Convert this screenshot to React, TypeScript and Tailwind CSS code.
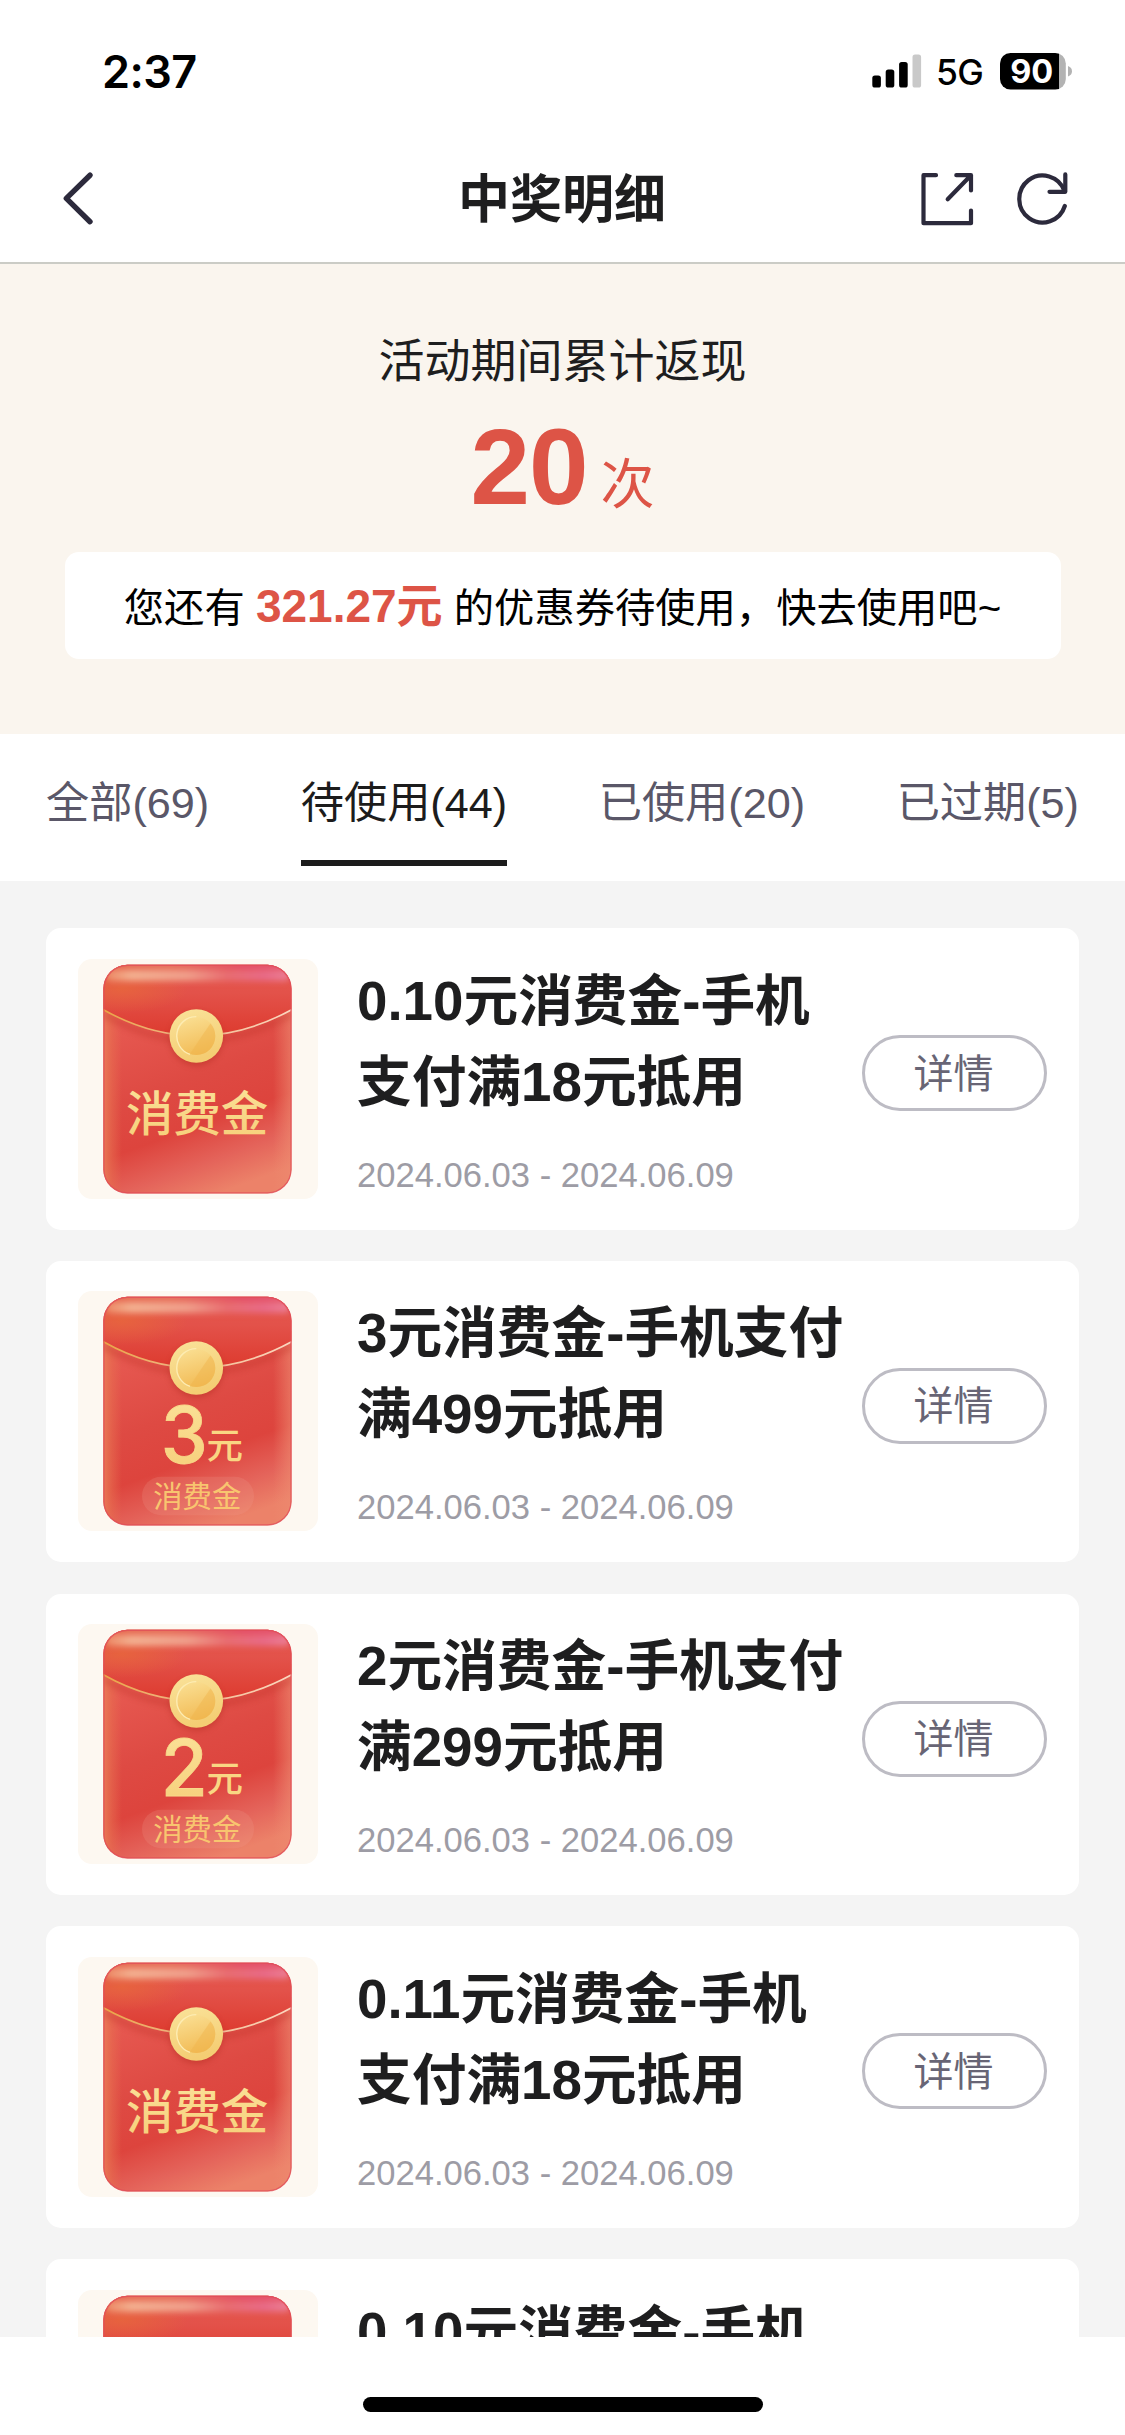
import React from "react";

const FONT = "font-['Liberation_Sans','Noto_Sans_CJK_SC',sans-serif]";

type Coupon = { title: [string, string]; date: string; amount?: string };

const COUPONS: Coupon[] = [
  { title: ["0.10元消费金-手机", "支付满18元抵用"], date: "2024.06.03 - 2024.06.09" },
  { title: ["3元消费金-手机支付", "满499元抵用"], date: "2024.06.03 - 2024.06.09", amount: "3" },
  { title: ["2元消费金-手机支付", "满299元抵用"], date: "2024.06.03 - 2024.06.09", amount: "2" },
  { title: ["0.11元消费金-手机", "支付满18元抵用"], date: "2024.06.03 - 2024.06.09" },
  { title: ["0.10元消费金-手机", "支付满18元抵用"], date: "2024.06.03 - 2024.06.09" },
];

const TABS = [
  { label: "全部(69)", active: false },
  { label: "待使用(44)", active: true },
  { label: "已使用(20)", active: false },
  { label: "已过期(5)", active: false },
];

function StatusBar() {
  return (
    <div className="flex h-[140px] shrink-0 items-start justify-between pl-[102px] pr-[53px] pt-[43px]">
      <div className="pt-[1px] font-['Inter'] text-[45px] font-semibold leading-[56px] tracking-[-0.6px] text-black">2:37</div>
      <div className="flex h-[56px] items-center">
        <svg width="50" height="34" viewBox="0 0 50 34" className="mr-[14px]">
          <rect x="0.3" y="21.5" width="8.6" height="12" rx="2.6" fill="#000" />
          <rect x="13.7" y="15.5" width="8.6" height="18" rx="2.6" fill="#000" />
          <rect x="27.1" y="8" width="8.6" height="25.5" rx="2.6" fill="#000" />
          <rect x="40.5" y="0.5" width="8.6" height="33" rx="2.6" fill="#c9c9c9" />
        </svg>
        <span className="mt-[3px] w-[64px] font-['Inter'] text-[35.5px] font-medium leading-[40px] tracking-[-0.8px] text-black">5G</span>
        <svg width="72" height="38" viewBox="0 0 72 38">
          <defs>
            <clipPath id="battery">
              <rect x="0" y="1" width="65.8" height="36.5" rx="10.5" />
            </clipPath>
          </defs>
          <g clipPath="url(#battery)">
            <rect x="0" y="0" width="59" height="38" fill="#000" />
            <rect x="59" y="0" width="8" height="38" fill="#b3b3b3" />
          </g>
          <path d="M68 14 Q72 15.5 72 19.3 Q72 23 68 24.5Z" fill="#b3b3b3" />
          <text x="31.7" y="31.3" textAnchor="middle" fontFamily="Inter" fontWeight="700" fontSize="32.5" fill="#fff">
            90
          </text>
        </svg>
      </div>
    </div>
  );
}

function NavBar() {
  return (
    <div className="flex h-[122px] shrink-0 items-center justify-between pl-[60px] pr-[55px]">
      <svg width="160" height="60" viewBox="60 170 160 60" fill="none" stroke="#2c2a3c" strokeWidth="5.4" strokeLinecap="round" strokeLinejoin="round">
        <path d="M90 174.2 L66.3 197.4 L90 220.7" />
      </svg>
      <h1 className="-translate-x-[3px] -translate-y-[1px] text-[52px] font-semibold leading-[60px] text-[#1e1e1f]">中奖明细</h1>
      <svg width="160" height="60" viewBox="910 170 160 60" fill="none" stroke="#2c2a3c" strokeWidth="4.2" strokeLinecap="round" strokeLinejoin="round">
        <path d="M936 174.2 H923.5 V222.2 H971 V209.5" />
        <path d="M956.3 174.2 H971 V189.5 M971 174.2 L947.7 198.3" />
        <path d="M1064.8 205 A23.3 23.5 0 1 1 1064.5 190" />
        <path d="M1065.3 173.4 V190.8 H1049.5" />
      </svg>
    </div>
  );
}

function Summary() {
  return (
    <div className="flex h-[470px] shrink-0 flex-col items-center bg-[#faf5ee] pt-[67px]">
      <p className="text-[46px] leading-[60px] text-[#1e1e1f]">活动期间累计返现</p>
      <p className="mt-[18px] flex h-[116px] items-baseline leading-[116px] text-[#dd5446]">
        <span className="text-[107px] font-bold tracking-[-1px]">20</span>
        <span className="ml-[13px] text-[54px]">次</span>
      </p>
      <div className="mt-[27px] flex h-[107px] w-[996px] shrink-0 justify-center rounded-[14px] bg-white">
        <p className="whitespace-pre text-[40.3px] leading-[108px] text-black">
          您还有 <span className="text-[46px] font-bold text-[#dd5446]">321.27元</span> 的优惠券待使用，快去使用吧~
        </p>
      </div>
    </div>
  );
}

function Tabs() {
  return (
    <div className="flex h-[147px] shrink-0 items-start justify-between bg-white px-[46px] pt-[39px]">
      {TABS.map((t) => (
        <div
          key={t.label}
          className={
            t.active
              ? "h-[93px] border-b-[6px] border-[#1c1c1c] text-[43.2px] leading-[60px] text-[#1c1c1c]"
              : "h-[93px] text-[43.2px] leading-[60px] text-[#5a5768]"
          }
        >
          {t.label}
        </div>
      ))}
    </div>
  );
}

function Envelope({ id, amount }: { id: string; amount?: string }) {
  const u = (n: string) => `url(#${n}-${id})`;
  const cjk = "'Noto Sans CJK SC', sans-serif";
  return (
    <svg width="240" height="240" viewBox="0 0 240 240" className="shrink-0 rounded-[14px] bg-[#fdf8f1]">
      <defs>
        <clipPath id={`env-${id}`}>
          <rect x="25.4" y="5.8" width="188" height="228.6" rx="24" />
        </clipPath>
        <linearGradient id={`body-${id}`} x1="0.3" y1="0" x2="0.6" y2="1">
          <stop offset="0.2" stopColor="#e65850" />
          <stop offset="0.5" stopColor="#de4a43" />
          <stop offset="0.7" stopColor="#dd443d" />
          <stop offset="0.86" stopColor="#e4635a" />
          <stop offset="1" stopColor="#ec8269" />
        </linearGradient>
        <linearGradient id={`flap-${id}`} x1="0" y1="0" x2="0" y2="1">
          <stop offset="0" stopColor="#e5584c" />
          <stop offset="0.4" stopColor="#e3524a" />
          <stop offset="1" stopColor="#dd3a2e" />
        </linearGradient>
        <linearGradient id={`shine-${id}`} gradientUnits="userSpaceOnUse" x1="25" y1="0" x2="214" y2="0">
          <stop offset="0" stopColor="#ec8660" />
          <stop offset="0.15" stopColor="#f3b292" />
          <stop offset="0.45" stopColor="#f0a08c" />
          <stop offset="0.65" stopColor="#e86e72" />
          <stop offset="0.85" stopColor="#e86a88" />
          <stop offset="1" stopColor="#ec8298" />
        </linearGradient>
        <linearGradient id={`top-${id}`} gradientUnits="userSpaceOnUse" x1="25" y1="0" x2="214" y2="0">
          <stop offset="0" stopColor="#e6684f" />
          <stop offset="0.35" stopColor="#e66f58" />
          <stop offset="0.75" stopColor="#e44f66" />
          <stop offset="1" stopColor="#e4586e" />
        </linearGradient>
        <linearGradient id={`line-${id}`} x1="0" y1="0" x2="1" y2="0">
          <stop offset="0" stopColor="#e9a545" />
          <stop offset="0.4" stopColor="#f0b585" />
          <stop offset="1" stopColor="#fbd8c0" />
        </linearGradient>
        <linearGradient id={`edge-${id}`} x1="0" y1="0" x2="1" y2="0">
          <stop offset="0" stopColor="#ea8058" stopOpacity="0.9" />
          <stop offset="0.05" stopColor="#e87050" stopOpacity="0.5" />
          <stop offset="0.1" stopColor="#e87050" stopOpacity="0" />
          <stop offset="0.9" stopColor="#ee8a70" stopOpacity="0" />
          <stop offset="1" stopColor="#ee8a70" stopOpacity="0.65" />
        </linearGradient>
        <linearGradient id={`coin-${id}`} x1="0" y1="0" x2="0.3" y2="1">
          <stop offset="0" stopColor="#fae39b" />
          <stop offset="1" stopColor="#f4cd73" />
        </linearGradient>
        <linearGradient id={`face-${id}`} x1="0.2" y1="0" x2="0.5" y2="1">
          <stop offset="0" stopColor="#fadf93" />
          <stop offset="1" stopColor="#f2bb55" />
        </linearGradient>
        <linearGradient id={`gold-${id}`} x1="0" y1="0" x2="0" y2="1">
          <stop offset="0" stopColor="#fbe49c" />
          <stop offset="1" stopColor="#f6cd78" />
        </linearGradient>
        <radialGradient id={`glow-${id}`}>
          <stop offset="0" stopColor="#e8683a" stopOpacity="0.75" />
          <stop offset="1" stopColor="#e8683a" stopOpacity="0" />
        </radialGradient>
        <filter id={`soft-${id}`} filterUnits="userSpaceOnUse" x="-20" y="-20" width="280" height="280" colorInterpolationFilters="sRGB">
          <feGaussianBlur stdDeviation="3" />
        </filter>
      </defs>
      <g clipPath={u("env")}>
        <rect x="25" y="5" width="189" height="230" fill={u("body")} />
        <rect x="25" y="40" width="189" height="195" fill={u("edge")} />
        <path d="M25 52 Q118 105 214 52 V58 Q118 111 25 58Z" fill="#b82a20" opacity="0.35" filter={u("soft")} />
        <path d="M25 5 H214 V51 Q118 103 25 51Z" fill={u("flap")} />
        <ellipse cx="44" cy="30" rx="66" ry="24" fill={u("glow")} />
        <rect x="15" y="-4" width="210" height="18" fill={u("top")} filter={u("soft")} />
        <rect x="27" y="11" width="185" height="11" rx="5.5" fill={u("shine")} filter={u("soft")} />
        <path d="M25 50.5 Q118 103 214 50.5" fill="none" stroke={u("line")} strokeWidth="1.6" />
      </g>
      <rect x="26" y="6.4" width="187" height="227.5" rx="23.5" fill="none" stroke="#e04c58" strokeWidth="1.3" opacity="0.75" />
      <circle cx="118.3" cy="80" r="26.5" fill="#a82418" opacity="0.4" filter={u("soft")} />
      <circle cx="118.3" cy="77" r="26.8" fill={u("coin")} />
      <circle cx="118.3" cy="77" r="19" fill={u("face")} />
      <path d="M132.5 64.5 A19 19 0 0 1 112 95 Q119 84 132.5 64.5Z" fill="#efb34c" opacity="0.45" />
      <path d="M118.3 57.6 A19.4 19.4 0 0 0 112 95.4" fill="none" stroke="#fdecb2" strokeWidth="1.4" />
      {amount ? (
        <>
          <text x="82.8" y="171.6" fontFamily="Inter" fontWeight="500" fontSize="79" textLength="47" lengthAdjust="spacingAndGlyphs" fill={u("gold")} stroke="#f9d98a" strokeWidth="0.8">
            {amount}
          </text>
          <text x="128.5" y="168.4" fontFamily={cjk} fontWeight="500" fontSize="36.5" fill="#f9d683">
            元
          </text>
          <rect x="64" y="185.7" width="112" height="38.6" rx="19.3" fill="#f0a090" opacity="0.2" />
          <text x="75.2" y="216.2" fontFamily={cjk} fontSize="29.4" fill="#f8c56f">
            消费金
          </text>
        </>
      ) : (
        <text x="48" y="172" fontFamily={cjk} fontWeight="500" fontSize="47.4" fill={u("gold")}>
          消费金
        </text>
      )}
    </svg>
  );
}

function CouponCard({ coupon, id }: { coupon: Coupon; id: string }) {
  return (
    <div className="flex h-[301.5px] shrink-0 items-start rounded-[15px] bg-white pl-[32px] pr-[32px] pt-[30.5px]">
      <Envelope id={id} amount={coupon.amount} />
      <div className="ml-[39px] grow pt-[2px]">
        <h2 className="whitespace-nowrap text-[54.7px] font-bold leading-[81px] text-[#1e1e1f]">
          {coupon.title[0]}
          <br />
          {coupon.title[1]}
        </h2>
        <p className="mt-[32px] whitespace-nowrap text-[34.6px] leading-[40px] text-[#9d9ca5]">{coupon.date}</p>
      </div>
      <button className="mt-[76.5px] flex h-[76px] w-[185px] shrink-0 items-center justify-center rounded-full border-[3px] border-[#bdbcc4] pr-[2px] pt-[1px] text-[40px] leading-[40px] text-[#686575]">
        详情
      </button>
    </div>
  );
}

export default function App() {
  return (
    <div className={`${FONT} flex h-[2435px] w-[1125px] flex-col overflow-hidden bg-white`}>
      <StatusBar />
      <NavBar />
      <div className="h-[2px] shrink-0 bg-[#cbccc6]" />
      <Summary />
      <Tabs />
      <div className="flex h-[1456px] shrink-0 flex-col gap-[31.25px] overflow-hidden bg-[#f4f4f4] pl-[46px] pr-[46px] pt-[47px]">
        {COUPONS.map((c, i) => (
          <CouponCard key={i} id={String(i)} coupon={c} />
        ))}
      </div>
      <div className="flex grow justify-center pt-[60px]">
        <div className="h-[15px] w-[400px] rounded-full bg-black" />
      </div>
    </div>
  );
}
